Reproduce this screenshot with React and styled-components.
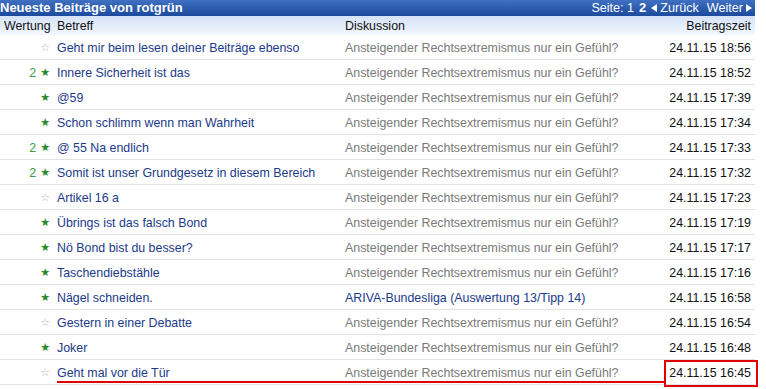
import styled, { createGlobalStyle } from 'styled-components';

const GlobalStyle = createGlobalStyle`
  *, *::before, *::after {
    box-sizing: border-box;
  }
  html, body {
    margin: 0;
    padding: 0;
    background: #fff;
  }
  body {
    font-family: 'Liberation Sans', Arial, sans-serif;
    font-size: 12.4px;
  }
`;

const DISC = 'Ansteigender Rechtsextremismus nur ein Gefühl?';

const posts = [
  { count: 0, title: 'Geht mir beim lesen deiner Beiträge ebenso', disc: DISC, time: '24.11.15 18:56' },
  { count: 2, title: 'Innere Sicherheit ist das', disc: DISC, time: '24.11.15 18:52' },
  { count: 1, title: '@59', disc: DISC, time: '24.11.15 17:39' },
  { count: 1, title: 'Schon schlimm wenn man Wahrheit', disc: DISC, time: '24.11.15 17:34' },
  { count: 2, title: '@ 55 Na endlich', disc: DISC, time: '24.11.15 17:33' },
  { count: 2, title: 'Somit ist unser Grundgesetz in diesem Bereich', disc: DISC, time: '24.11.15 17:32' },
  { count: 0, title: 'Artikel 16 a', disc: DISC, time: '24.11.15 17:23' },
  { count: 1, title: 'Übrings ist das falsch Bond', disc: DISC, time: '24.11.15 17:19' },
  { count: 1, title: 'Nö Bond bist du besser?', disc: DISC, time: '24.11.15 17:17' },
  { count: 1, title: 'Taschendiebstähle', disc: DISC, time: '24.11.15 17:16' },
  { count: 1, title: 'Nägel schneiden.', disc: 'ARIVA-Bundesliga (Auswertung 13/Tipp 14)', discLink: true, time: '24.11.15 16:58' },
  { count: 0, title: 'Gestern in einer Debatte', disc: DISC, time: '24.11.15 16:54' },
  { count: 1, title: 'Joker', disc: DISC, time: '24.11.15 16:48' },
  { count: 0, title: 'Geht mal vor die Tür', disc: DISC, time: '24.11.15 16:45' },
];

const Page = styled.div`
  position: relative;
  width: 766px;
  height: 389px;
  overflow: hidden;
`;

const Panel = styled.div`
  width: 755px;
`;

const TitleBar = styled.div`
  height: 16px;
  display: flex;
  align-items: center;
  justify-content: space-between;
  padding-right: 3px;
  background: linear-gradient(#3f70c2, #1c4a9c);
  color: #fff;
  line-height: 16px;
  overflow: hidden;
`;

const Title = styled.span`
  font-weight: bold;
  font-size: 13px;
`;

const Pager = styled.span`
  display: flex;
  align-items: center;
  gap: 5px;
  font-size: 12.6px;
`;

const Current = styled.b`
  font-weight: bold;
  font-size: 13px;
`;

const NavLink = styled.span`
  display: flex;
  align-items: center;
  gap: 1px;
  margin-left: ${p => (p.$spaced ? '3px' : '0')};
`;

const Arrow = styled.span`
  width: 0;
  height: 0;
  border-top: 4px solid transparent;
  border-bottom: 4px solid transparent;
  ${p =>
    p.$dir === 'left'
      ? 'border-right: 6px solid #fff; margin-right: 2px;'
      : 'border-left: 6px solid #fff; margin-left: 2px;'}
`;

const Grid = styled.div`
  display: grid;
  grid-template-columns: 54px 285px 1fr auto;
  column-gap: 3px;
`;

const HeadRow = styled(Grid)`
  height: 19px;
  align-items: center;
  background: linear-gradient(#d5e2f7, #f3f7fe);
  color: #111;
`;

const HeadCell = styled.span`
  padding-left: ${p => (p.$first ? '4px' : '0')};
  text-align: ${p => (p.$right ? 'right' : 'left')};
  padding-right: ${p => (p.$right ? '4px' : '0')};
`;

const Row = styled(Grid)`
  height: 25px;
  padding-top: 1px;
  align-items: center;
  border-bottom: 1px solid #e2e2e2;
`;

const Rating = styled.span`
  display: flex;
  justify-content: flex-end;
  align-items: center;
  gap: 4px;
  padding-right: 4px;
`;

const Count = styled.span`
  color: #3d9a3d;
`;

const Star = styled.span`
  font-family: 'DejaVu Sans', sans-serif;
  font-size: 11px;
  color: ${p => (p.$filled ? '#2b8a2b' : '#bdbdbd')};
`;

const Subject = styled.span`
  color: #1b3a8a;
  white-space: nowrap;
`;

const Discussion = styled.span`
  color: ${p => (p.$link ? '#1b3a8a' : '#7a7a7a')};
  white-space: nowrap;
`;

const Time = styled.span`
  color: #111;
  text-align: right;
  padding-right: 4px;
`;

const Underline = styled.div`
  position: absolute;
  left: 57px;
  top: 381px;
  width: 608px;
  height: 2px;
  background: #e00000;
`;

const MarkBox = styled.div`
  position: absolute;
  left: 664px;
  top: 360px;
  width: 94px;
  height: 27px;
  border: 2px solid #e00000;
`;

export default function App() {
  return (
    <Page>
      <GlobalStyle />
      <Panel>
        <TitleBar>
          <Title>Neueste Beiträge von rotgrün</Title>
          <Pager>
            <span>Seite: 1</span>
            <Current>2</Current>
            <NavLink><Arrow $dir='left' />Zurück</NavLink>
            <NavLink $spaced>Weiter<Arrow $dir='right' /></NavLink>
          </Pager>
        </TitleBar>
        <HeadRow>
          <HeadCell $first>Wertung</HeadCell>
          <HeadCell>Betreff</HeadCell>
          <HeadCell>Diskussion</HeadCell>
          <HeadCell $right>Beitragszeit</HeadCell>
        </HeadRow>
        {posts.map((p, i) => (
          <Row key={i}>
            <Rating>
              {p.count > 1 && <Count>{p.count}</Count>}
              <Star $filled={p.count > 0}>{p.count > 0 ? '★' : '☆'}</Star>
            </Rating>
            <Subject>{p.title}</Subject>
            <Discussion $link={p.discLink}>{p.disc}</Discussion>
            <Time>{p.time}</Time>
          </Row>
        ))}
      </Panel>
      <Underline />
      <MarkBox />
    </Page>
  );
}
